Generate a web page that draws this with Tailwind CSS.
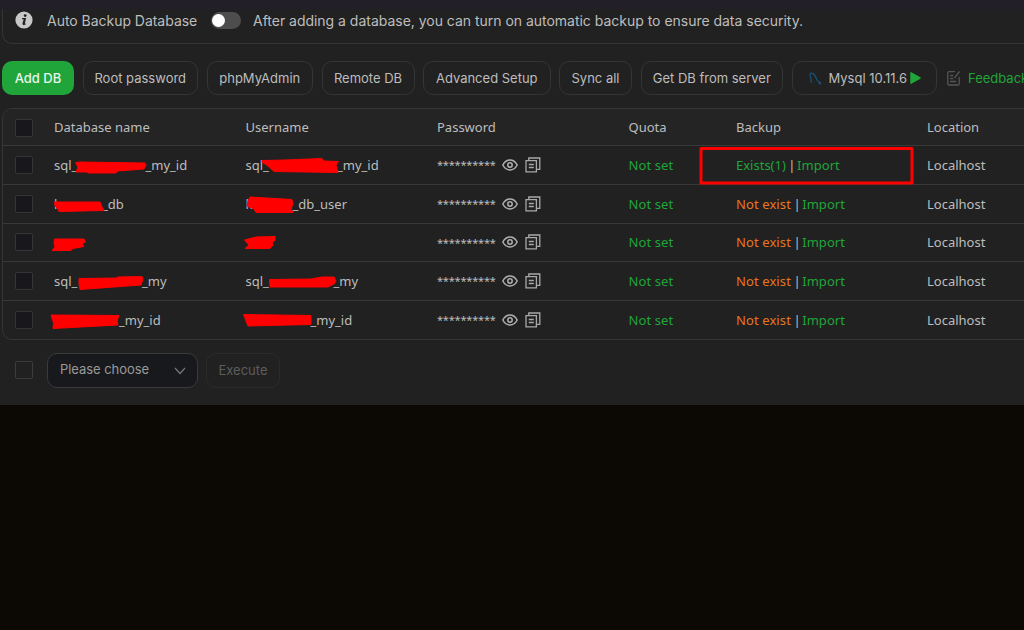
<!DOCTYPE html>
<html lang="en">
<head>
<meta charset="utf-8">
<title>Databases</title>
<script src="https://cdn.jsdelivr.net/npm/@tailwindcss/browser@4"></script>
</head>
<body class="relative h-[630px] w-[1024px] overflow-hidden bg-[#0c0803] font-['Inter',sans-serif] text-[13px] text-[#bdbdbd]">
<main class="h-[405px] overflow-hidden bg-[#212121]">
  <div class="h-[9px] bg-[#231f29]"></div>
  <section class="ml-[2px] flex h-[35px] w-[1040px] items-start rounded-bl-[10px] border-b border-l border-[#353535] pl-[12px] pt-[2px]">
    <svg class="size-[18px] shrink-0" viewBox="0 0 18 18"><circle cx="9" cy="9" r="8.6" fill="#c8c8c8"/><circle cx="10.2" cy="4.6" r="1.4" fill="#212121"/><path d="M7 7.7h3.3L9 13.2h1.6M9.5 8 8.2 12.2q-.3 1.4 1 1.3" fill="none" stroke="#212121" stroke-width="1.3"/></svg>
    <span class="ml-[14px] w-[151px] whitespace-nowrap text-[14px] leading-5 tracking-[-0.03px]">Auto Backup Database</span>
    <span class="ml-[13px] mt-px flex h-[17px] w-[30px] items-center rounded-full bg-[#4d4d4d] pl-px"><i class="size-[13px] rounded-full bg-white"></i></span>
    <span class="ml-[12px] whitespace-nowrap text-[14px] leading-5 tracking-[-0.02px]">After adding a database, you can turn on automatic backup to ensure data security.</span>
  </section>
  <nav class="ml-[2px] mt-[17px] flex h-[34px] w-[1060px] gap-[8.5px] whitespace-nowrap leading-[34px]">
    <button class="w-[72px] shrink-0 rounded-[10px] bg-[#20a53a] pt-px font-medium leading-[33px] text-[#e8f5ea]">Add DB</button>
    <button class="w-[115.5px] shrink-0 rounded-[10px] border border-[#353535] leading-[33px]">Root password</button>
    <button class="w-[106.5px] shrink-0 rounded-[10px] border border-[#353535] leading-[33px]">phpMyAdmin</button>
    <button class="w-[93px] shrink-0 rounded-[10px] border border-[#353535] leading-[33px]">Remote DB</button>
    <button class="w-[127.5px] shrink-0 rounded-[10px] border border-[#353535] leading-[33px]">Advanced Setup</button>
    <button class="w-[73px] shrink-0 rounded-[10px] border border-[#353535] leading-[33px]">Sync all</button>
    <button class="w-[142.5px] shrink-0 rounded-[10px] border border-[#353535] leading-[33px]">Get DB from server</button>
    <button class="flex w-[145px] shrink-0 items-center rounded-[10px] border border-[#353535] pl-[16px] leading-[33px]">
      <svg class="size-[13px]" viewBox="0 0 13 13" fill="none" stroke="#19567d" stroke-width="1.1"><path d="M3 10.500 2 9.800C3 8 1 5 1 2.300 1 .5 3.500 1 5 2.500 6.700 4.200 7 6 8 8c.8 1.600 2 2 3.300 2.500L10 11l2 1.500"/></svg>
      <span class="ml-[7px]">Mysql 10.11.6</span>
      <svg class="ml-[3px] h-[12px] w-[11px]" viewBox="0 0 11 12"><path d="M1 .8v10.400L10 6z" fill="#20a53a" stroke="#20a53a" stroke-width="1.500" stroke-linejoin="round"/></svg>
    </button>
    <span class="flex items-center pl-[2px]">
      <svg class="h-[16px] w-[13px]" viewBox="0 0 13 16" fill="none" stroke="#555" stroke-width="1.300"><path d="M8 1.600H2Q.8 1.600.8 3v10.700Q.8 15 2 15h9q1.200 0 1.200-1.300V7M3.200 5.500h3M3.200 8.500h3M3.200 11.500h6M7.500 8 12.500 1.500"/></svg>
      <span class="ml-[8px] text-[#20a53a]">Feedback</span>
    </span>
  </nav>
  <section id="table" class="ml-[2px] mt-[13px] h-[232px] w-[1040px] overflow-hidden rounded-l-[10px] border border-[#353535] font-['Noto_Sans',sans-serif]">
    <div class="grid h-[37px] grid-cols-[51px_191.500px_191.500px_191.500px_107.500px_191px_1fr] items-center border-b border-[#383838] bg-[#242424] pt-px">
      <i class="ml-[12px] size-[18px] rounded-[2px] border border-[#353535] bg-[#18181c]"></i>
      <span>Database name</span><span>Username</span><span>Password</span><span>Quota</span><span>Backup</span><span>Location</span>
    </div>
  </section>
  <footer class="ml-[15px] mt-[12.500px] flex h-[35px] items-center">
    <i class="size-[18px] rounded-[2px] border border-[#3c3c3c]"></i>
    <div class="ml-[14px] flex h-[35px] w-[151px] items-center justify-between rounded-[10px] border border-[#3a3a3a] bg-[#18191d] pl-[12px] pr-[11px] text-[#999]">
      <span class="tracking-[-0.05px]">Please choose</span>
      <svg class="mt-px h-[8px] w-[12px]" viewBox="0 0 12 8" fill="none" stroke="#777" stroke-width="1.2"><path d="m1 1 5 5.500L11 1"/></svg>
    </div>
    <button class="ml-[8px] h-[35px] w-[74px] rounded-[10px] border border-[#2b2b2b] pt-px text-[#5d5d5d]">Execute</button>
  </footer>
</main>
<svg class="absolute left-0 top-0 h-[630px] w-[1024px]" viewBox="0 0 1024 630" fill="red" stroke="red" stroke-linejoin="round">
  <path d="M75.500 162.500 80 162 145 163 146 165 144 169 118 171 116 173 88 173 87 172 76 172 78 167Z"/>
  <path d="M54.500 202 58 202 100 202 102 207 104 210.500 59 211.500 58 209 55 206Z"/>
  <path d="M54.500 239 84 239 85.500 242 82 244 84 246.500 73 248.500 71 250.500 52 250.500 55 247 54 243Z"/>
  <path d="M79 278.500 117 278 118 277 142 276.500 143 279 141 285 80 289.500 79 284Z"/>
  <path d="M51 315 119 315.500 117 321 118 325 53 328.500 53.500 323Z"/>
  <path d="M262 160.500 285 160 322 158.500 324 161 338.500 161.500 336 165 338 172.500 274 171.500 268 166 262 162Z"/>
  <path d="M248 201 250 197 292 199.500 293 204 291 209 293 212.500 256 212.500 254 209 247 206Z"/>
  <path d="M244.500 240 256 237 275 236.500 275 240 272 243 273 245 270 248.500 245 248.500 249 245Z"/>
  <path d="M269.500 279.500 311 279 322 277 334 277 336 281 334 284 328 287 270 287Z"/>
  <path d="M243.500 314.500 311 315.500 311 324.500 248 326 246 321Z"/>
  <rect x="701" y="148.500" width="211" height="34.500" fill="none" stroke-width="3"/>
</svg>
<script>
const green = 'text-[#20a53a]', orange = 'text-[#e77620]';
// [head, tail, tail offset] for the database name, then for the user name
const rows = [
  ['sql_', '_my_id', 91.5, 'sql_', '_my_id', 91.5],
  ['k', '_db', 48, 'k', '_db_user', 47],
  ['', '', 0, '', '', 0],
  ['sql_', '_my', 88, 'sql_', '_my', 88],
  ['', '_my_id', 65, '', '_my_id', 65]
];
const name = (head, tail, x) => `<span class="flex"><span class="shrink-0" style="width:${x}px">${head}</span><span>${tail}</span></span>`;
document.getElementById('table').insertAdjacentHTML('beforeend', rows.map((r, i) => `
<div class="grid h-[38.750px] grid-cols-[51px_191.500px_191.500px_191.500px_107.500px_191px_1fr] items-center border-b border-[#383838]">
  <i class="ml-[12px] size-[18px] rounded-[2px] border border-[#353535] bg-[#18181c]"></i>
  <span class="pt-[1.500px]">${name(r[0], r[1], r[2])}</span><span class="pt-[1.500px]">${name(r[3], r[4], r[5])}</span>
  <span class="flex items-center"><span class="w-[65px] pt-px text-[11px] tracking-[-0.2px]">**********</span>
    <svg class="h-[12px] w-[16px]" viewBox="0 0 16 12" fill="none" stroke="#b0b0b0" stroke-width="1.500"><path d="M.8 6Q3.500 1 8 1t7.200 5Q12.500 11 8 11T.8 6Z"/><circle cx="8" cy="6" r="2.200"/></svg>
    <svg class="ml-[7px] h-[16px] w-[16px]" viewBox="0 0 16 16" fill="none" stroke="#a8a8a8" stroke-width="1.300"><path d="M1 3.600h10.400v11.200H1zM3.800 3.300V1H14.800V12.400H11.600M3.800 7.500h5M3.800 10.500h5"/></svg>
  </span>
  <span class="pt-[1.500px] tracking-[0.1px] ${green}">Not set</span>
  <span class="pt-[1.500px]">${i ? `<span class="tracking-[0.1px] ${orange}">Not exist</span>` : `<span class="${green}">Exists(1)</span>`}<span class="tracking-[-0.9px]"> | </span><span class="tracking-[0.05px] ${green}">Import</span></span>
  <span class="pt-[1.500px]">Localhost</span>
</div>`).join(''));
</script>
</body>
</html>
